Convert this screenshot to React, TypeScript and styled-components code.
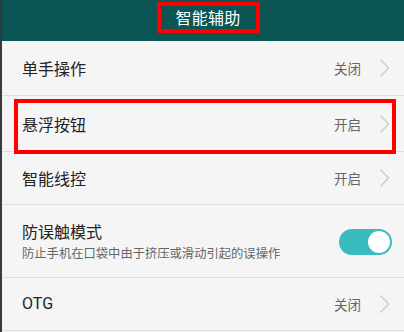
import styled, { createGlobalStyle } from "styled-components";

const GlobalStyle = createGlobalStyle`
  html, body {
    margin: 0;
    padding: 0;
    background: #f5f5f5;
  }
  body {
    font-family: "Noto Sans CJK SC", "Noto Sans", sans-serif;
  }
`;

const HEADER_COLOR = "#0b5555";
const TEAL = "#38bcbd";
const MARK_RED = "#f00";

type RowItem = {
  title: string;
  subtitle?: string;
  value?: string;
  toggle?: boolean;
  height: number;
  marked?: boolean;
  latin?: boolean;
};

const rows: RowItem[] = [
  { title: "单手操作", value: "关闭", height: 54 },
  { title: "悬浮按钮", value: "开启", height: 55, marked: true },
  { title: "智能线控", value: "开启", height: 52 },
  {
    title: "防误触模式",
    subtitle: "防止手机在口袋中由于挤压或滑动引起的误操作",
    toggle: true,
    height: 72,
  },
  { title: "OTG", value: "关闭", height: 52, latin: true },
];

const Chevron = () => (
  <svg width="11" height="20" viewBox="0 0 11 20">
    <polyline
      points="1.5,1.5 9.5,10 1.5,18.5"
      fill="none"
      stroke="#c9c9c9"
      strokeWidth="1.3"
    />
  </svg>
);

export default function App() {
  return (
    <>
      <GlobalStyle />
      <Screen>
        <EdgeStrip />
        <Main>
          <Header>
            <TitleMark>
              <Title>智能辅助</Title>
            </TitleMark>
          </Header>
          <List>
            {rows.map((r) => (
              <Row key={r.title} $height={r.height} $marked={r.marked}>
                <TextBlock>
                  <RowTitle $latin={r.latin}>{r.title}</RowTitle>
                  {r.subtitle && <RowSubtitle>{r.subtitle}</RowSubtitle>}
                </TextBlock>
                {r.value && (
                  <Trailing>
                    <Value>{r.value}</Value>
                    <Chevron />
                  </Trailing>
                )}
                {r.toggle && (
                  <Toggle>
                    <Knob />
                  </Toggle>
                )}
              </Row>
            ))}
          </List>
        </Main>
      </Screen>
    </>
  );
}

const Screen = styled.div`
  width: 404px;
  height: 332px;
  display: flex;
  overflow: hidden;
  background: #f5f5f5;
`;

const EdgeStrip = styled.div`
  width: 2px;
  flex-shrink: 0;
  background: linear-gradient(#26403c 0 41px, #3a3a3a 41px);
`;

const Main = styled.div`
  flex: 1;
  display: flex;
  flex-direction: column;
`;

const Header = styled.header`
  height: 41px;
  background: ${HEADER_COLOR};
  display: flex;
  justify-content: center;
  align-items: flex-start;
  padding-top: 2px;
  box-sizing: border-box;
  padding-right: 2px;
`;

const TitleMark = styled.div`
  border: 4px solid ${MARK_RED};
  width: 103px;
  height: 31px;
  box-sizing: border-box;
  display: flex;
  justify-content: center;
  align-items: center;
  margin-left: 12px;
`;

const Title = styled.span`
  color: #fff;
  font-size: 16px;
  line-height: 1;
  margin-top: -2px;
  letter-spacing: 0.2px;
`;

const List = styled.div`
  display: flex;
  flex-direction: column;
`;

const Row = styled.div<{ $height: number; $marked?: boolean }>`
  position: relative;
  height: ${(p) => p.$height}px;
  display: flex;
  align-items: center;
  justify-content: space-between;
  padding: 0 14px 0 20px;
  border-bottom: 1px solid #dedede;
  &::after {
    content: "";
    display: ${(p) => (p.$marked ? "block" : "none")};
    position: absolute;
    left: 12px;
    right: 8px;
    top: 3px;
    bottom: -3px;
    border: 4px solid ${MARK_RED};
    pointer-events: none;
  }
`;

const TextBlock = styled.div`
  display: flex;
  flex-direction: column;
  gap: 2px;
`;

const RowTitle = styled.span<{ $latin?: boolean }>`
  font-size: 16px;
  color: #222;
  line-height: 22px;
  font-family: ${(p) =>
    p.$latin ? "Roboto, sans-serif" : `"Noto Sans CJK SC", sans-serif`};
`;

const RowSubtitle = styled.span`
  font-size: 12.3px;
  color: #666;
  line-height: 18px;
`;

const Trailing = styled.div`
  display: flex;
  align-items: center;
  gap: 18px;
`;

const Value = styled.span`
  font-size: 13.5px;
  color: #666;
`;

const Toggle = styled.div`
  width: 53px;
  height: 26px;
  border-radius: 13px;
  background: ${TEAL};
  display: flex;
  align-items: center;
  justify-content: flex-end;
  padding: 0 2px;
  box-sizing: border-box;
  margin-right: -2px;
  margin-top: 2px;
`;

const Knob = styled.div`
  width: 22px;
  height: 22px;
  border-radius: 50%;
  background: #fff;
`;
